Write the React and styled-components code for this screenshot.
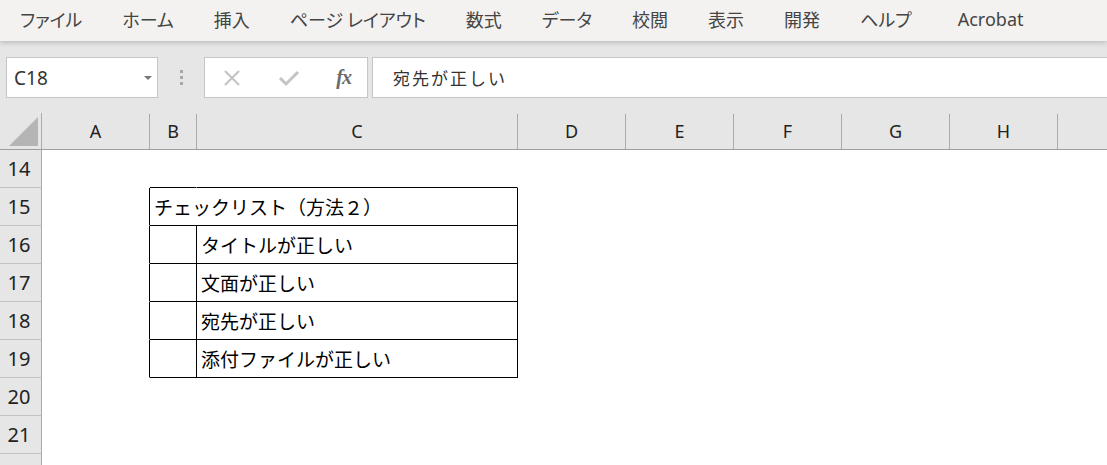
import React from "react";
import styled, { createGlobalStyle } from "styled-components";

const GlobalStyle = createGlobalStyle`
  html, body { margin: 0; padding: 0; background: #ffffff; overflow: hidden; }
  body { font-family: "Noto Sans CJK JP", "Noto Sans", sans-serif; }
`;

const COLS = "42px 108px 47px 321px 108px 108px 108px 108px 108px 1fr";

const Page = styled.div`
  width: 1107px;
  height: 465px;
  display: flex;
  flex-direction: column;
  overflow: hidden;
`;

const Ribbon = styled.div`
  height: 41px;
  flex: none;
  background: #f3f2f1;
  display: flex;
  align-items: center;
  padding-left: 0;
  box-shadow: 0 2px 5px rgba(0, 0, 0, 0.18);
  position: relative;
  z-index: 1;
`;

const Tab = styled.div`
  padding: 0 20px 3px;
  margin-left: ${(p) => p.$shift || 0}px;
  font-size: 18px;
  color: #444444;
  font-feature-settings: "palt";
  white-space: nowrap;
  font-family: ${(p) => (p.$latin ? '"Noto Sans", sans-serif' : '"Noto Sans CJK JP", sans-serif')};
`;

const FormulaArea = styled.div`
  height: 72px;
  flex: none;
  background: #e6e6e6;
  display: flex;
  align-items: flex-start;
  padding: 16px 0 0 6px;
  box-sizing: border-box;
`;

const Box = styled.div`
  height: 41px;
  box-sizing: border-box;
  background: #ffffff;
  border: 1px solid #c6c6c6;
  display: flex;
  align-items: center;
  position: relative;
`;

const NameBox = styled(Box)`
  width: 152px;
  padding-left: 7px;
  font-size: 19px;
  color: #333333;
  font-family: "Noto Sans", sans-serif;
`;

const DropArrow = styled.span`
  position: absolute;
  right: 5px;
  top: 18px;
  width: 0;
  height: 0;
  border-left: 4px solid transparent;
  border-right: 4px solid transparent;
  border-top: 4px solid #777777;
`;

const Grip = styled.div`
  width: 46px;
  height: 41px;
  display: flex;
  flex-direction: column;
  align-items: center;
  justify-content: center;
  gap: 3px;
`;

const Dot = styled.span`
  width: 3px;
  height: 3px;
  background: #a8a8a8;
`;

const ButtonsBox = styled(Box)`
  width: 164px;
  justify-content: space-between;
  padding: 0 16px 0 17px;
`;

const Fx = styled.span`
  font-family: "Liberation Serif", serif;
  font-style: italic;
  font-weight: bold;
  font-size: 20px;
  color: #6a6a6a;
  letter-spacing: -1px;
`;

const FormulaInput = styled(Box)`
  margin-left: 4px;
  flex: 1;
  border-right: none;
  padding-left: 20px;
  font-size: 17px;
  letter-spacing: 2px;
  color: #333333;
`;

const Grid = styled.div`
  display: grid;
  grid-template-columns: ${COLS};
  flex: none;
`;

const HeaderRow = styled(Grid)`
  height: 36px;
  background: #e6e6e6;
  border-bottom: 1px solid #9e9e9e;
  box-sizing: content-box;
`;

const Corner = styled.div`
  border-right: 1px solid #ababab;
  position: relative;
`;

const CornerTri = styled.svg`
  position: absolute;
  left: 9px;
  bottom: 3px;
`;

const ColHead = styled.div`
  border-right: ${(p) => (p.$last ? "none" : "1px solid #ababab")};
  margin-top: 1px;
  display: flex;
  align-items: center;
  justify-content: center;
  font-family: "Noto Sans", sans-serif;
  font-size: 18px;
  color: #222222;
  padding-bottom: 1px;
`;

const Row = styled(Grid)`
  height: 38px;
`;

const RowHead = styled.div`
  background: #e6e6e6;
  border-right: 1px solid #ababab;
  border-bottom: 1px solid #c2c2c2;
  box-sizing: border-box;
  display: flex;
  align-items: center;
  justify-content: center;
  font-family: "Noto Sans", sans-serif;
  font-size: 20px;
  color: #222222;
  padding-right: 3px;
`;

const Cell = styled.div`
  box-sizing: border-box;
  grid-column: span ${(p) => p.$span || 1};
  border-right: 1px solid ${(p) => (p.$right ? "#000000" : "transparent")};
  border-bottom: 1px solid ${(p) => (p.$bottom ? "#000000" : "transparent")};
  display: flex;
  align-items: center;
  padding-left: 4px;
  padding-bottom: 1px;
  font-size: 19px;
  color: #000000;
  white-space: nowrap;
  overflow: visible;
`;

const columns = ["A", "B", "C", "D", "E", "F", "G", "H", ""];
const tabs = ["ファイル", "ホーム", "挿入", "ページ レイアウト", "数式", "データ", "校閲", "表示", "開発", "ヘルプ"];

const rows = [
  { n: 14, kind: "topEdge" },
  { n: 15, kind: "title", text: "チェックリスト（方法２）" },
  { n: 16, kind: "item", text: "タイトルが正しい" },
  { n: 17, kind: "item", text: "文面が正しい" },
  { n: 18, kind: "item", text: "宛先が正しい" },
  { n: 19, kind: "item", text: "添付ファイルが正しい" },
  { n: 20, kind: "empty" },
  { n: 21, kind: "empty" },
  { n: 22, kind: "empty" },
];

function SheetRow({ r }) {
  const rest = [4, 5, 6, 7, 8, 9].map((i) => <Cell key={i} />);
  if (r.kind === "title") {
    return (
      <Row>
        <RowHead>{r.n}</RowHead>
        <Cell $right />
        <Cell $span={2} $right $bottom>{r.text}</Cell>
        {rest}
      </Row>
    );
  }
  if (r.kind === "item") {
    return (
      <Row>
        <RowHead>{r.n}</RowHead>
        <Cell $right />
        <Cell $right $bottom />
        <Cell $right $bottom>{r.text}</Cell>
        {rest}
      </Row>
    );
  }
  const edge = r.kind === "topEdge";
  return (
    <Row>
      <RowHead>{r.n}</RowHead>
      <Cell />
      <Cell $bottom={edge} />
      <Cell $bottom={edge} />
      {rest}
    </Row>
  );
}

export default function App() {
  return (
    <Page>
      <GlobalStyle />
      <Ribbon>
        {tabs.map((t) => (
          <Tab key={t}>{t}</Tab>
        ))}
        <Tab $latin $shift={6}>Acrobat</Tab>
      </Ribbon>
      <FormulaArea>
        <NameBox>
          C18
          <DropArrow />
        </NameBox>
        <Grip>
          <Dot />
          <Dot />
          <Dot />
        </Grip>
        <ButtonsBox>
          <svg width="20" height="20" viewBox="0 0 20 20">
            <path d="M3 3 L17 17 M17 3 L3 17" stroke="#c4c4c4" strokeWidth="2" fill="none" />
          </svg>
          <svg width="22" height="20" viewBox="0 0 22 20">
            <path d="M2 10 L8 16 L20 4" stroke="#c4c4c4" strokeWidth="3" fill="none" />
          </svg>
          <Fx>fx</Fx>
        </ButtonsBox>
        <FormulaInput>宛先が正しい</FormulaInput>
      </FormulaArea>
      <HeaderRow>
        <Corner>
          <CornerTri width="29" height="29" viewBox="0 0 29 29">
            <polygon points="29,0 29,29 0,29" fill="#b5b5b5" />
          </CornerTri>
        </Corner>
        {columns.map((c, i) => (
          <ColHead key={i} $last={i === columns.length - 1}>
            {c}
          </ColHead>
        ))}
      </HeaderRow>
      {rows.map((r) => (
        <SheetRow key={r.n} r={r} />
      ))}
    </Page>
  );
}
